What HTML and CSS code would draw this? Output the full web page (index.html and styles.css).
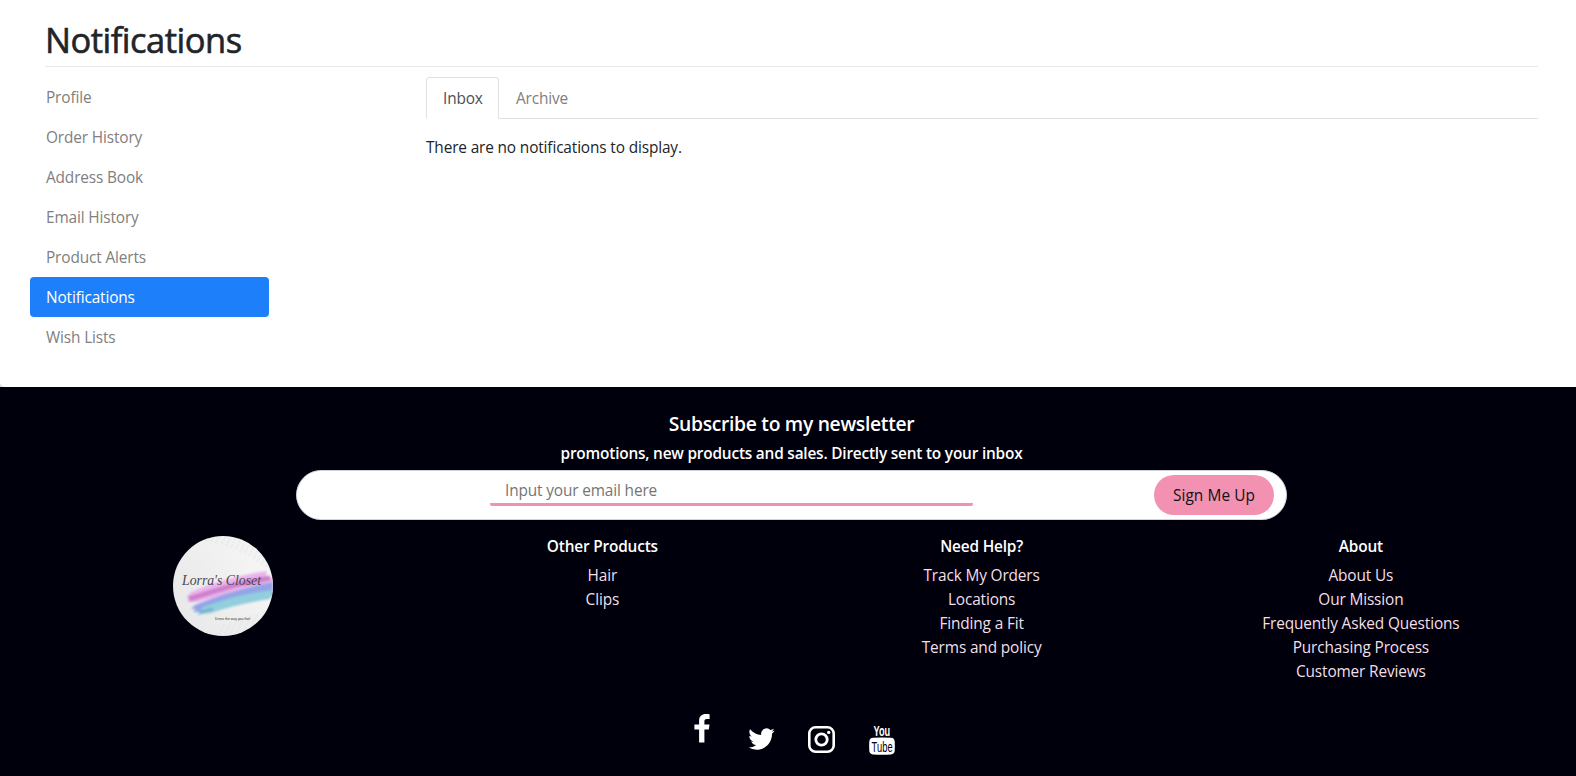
FILE: index.html
```html
<!DOCTYPE html>
<html lang="en">
<head>
<meta charset="utf-8">
<title>Notifications</title>
<link rel="stylesheet" href="styles.css">
</head>
<body>
<div class="backdrop">
  <main class="account">
    <h1 class="title">Notifications</h1>
    <div class="columns">
      <nav class="side-nav">
        <a>Profile</a>
        <a>Order History</a>
        <a>Address Book</a>
        <a>Email History</a>
        <a>Product Alerts</a>
        <a class="active">Notifications</a>
        <a>Wish Lists</a>
      </nav>
      <section class="content">
        <div class="tabs">
          <a class="tab current">Inbox</a>
          <a class="tab">Archive</a>
        </div>
        <p class="empty">There are no notifications to display.</p>
      </section>
    </div>
  </main>
</div>
<footer class="footer">
  <h5 class="news-title">Subscribe to my newsletter</h5>
  <h6 class="news-sub">promotions, new products and sales. Directly sent to your inbox</h6>
  <form class="signup">
    <input class="email" type="text" placeholder="Input your email here">
    <button class="join" type="button">Sign Me Up</button>
  </form>
  <div class="links">
    <div class="logo-cell">
      <svg class="logo" viewBox="0 0 100 100">
        <defs>
          <clipPath id="disc"><circle cx="50" cy="50" r="50"/></clipPath>
          <linearGradient id="paper" x1="1" y1="0" x2="0" y2=".6"><stop offset="0" stop-color="#f8f8f8"/><stop offset="1" stop-color="#e9e9ea"/></linearGradient>
          <pattern id="weave" width="5" height="3" patternUnits="userSpaceOnUse" patternTransform="rotate(28)"><path d="M0 1H3" stroke="#dedede" stroke-width=".8"/></pattern>
          <filter id="soft"><feGaussianBlur stdDeviation=".8"/></filter>
        </defs>
        <g clip-path="url(#disc)">
          <rect width="100" height="100" fill="url(#paper)"/>
          <path d="M30 0H100V38Q65 8 30 6ZM45 90L100 72V100H45Z" fill="url(#weave)"/>
          <g filter="url(#soft)">
            <path d="M18 56Q50 42 94 35L93 40L100 42V54Q60 56 24 66L14 66L17 62L13 62Z" fill="#e9b4ec"/>
            <path d="M16 63Q45 54 62 49L97 42" stroke="#cf80cc" stroke-width="5" fill="none"/>
            <path d="M22 69Q58 54 100 46V60Q60 66 28 76L20 76L23 73L18 73Z" fill="#93a5e6"/>
            <path d="M30 71Q65 58 100 54L97 63Q65 68 38 77L24 79L27 75Z" fill="#91cfdd"/>
            <path d="M27 76L40 73" stroke="#74abcd" stroke-width="2.5" fill="none"/>
          </g>
          <text class="logo-name" x="9" y="49" textLength="79" lengthAdjust="spacingAndGlyphs">Lorra's Closet</text>
          <text class="logo-tag" x="42" y="84" textLength="35" lengthAdjust="spacingAndGlyphs">Dress the way you feel</text>
        </g>
      </svg>
    </div>
    <div class="col">
      <h6>Other Products</h6>
      <a>Hair</a>
      <a>Clips</a>
    </div>
    <div class="col">
      <h6>Need Help?</h6>
      <a>Track My Orders</a>
      <a>Locations</a>
      <a>Finding a Fit</a>
      <a>Terms and policy</a>
    </div>
    <div class="col">
      <h6>About</h6>
      <a>About Us</a>
      <a>Our Mission</a>
      <a>Frequently Asked Questions</a>
      <a>Purchasing Process</a>
      <a>Customer Reviews</a>
    </div>
  </div>
  <div class="social">
    <svg class="facebook" viewBox="0 0 16 29"><path d="M15.6.3V4.9H12.9C10.8 4.9 10.4 5.9 10.4 7.3V10.4H15.5L14.8 15.4H10.4V28.5H5.1V15.4H.4V10.4H5.1V6.7C5.1 2.3 7.8 0 11.8 0 13.6 0 15.2.1 15.6.3Z" fill="#fff"/></svg>
    <svg class="twitter" viewBox="0 0 24 20"><path d="M23.95 2.57a10 10 0 0 1-2.82.77 4.96 4.96 0 0 0 2.16-2.72c-.95.55-2 .96-3.13 1.18a4.92 4.92 0 0 0-8.38 4.48C7.69 6.1 4.07 4.14 1.64 1.16a4.82 4.82 0 0 0-.67 2.48c0 1.71.87 3.21 2.19 4.1a4.9 4.9 0 0 1-2.23-.62v.06a4.92 4.92 0 0 0 3.95 4.83 5 5 0 0 1-2.21.08 4.94 4.94 0 0 0 4.6 3.42A9.87 9.87 0 0 1 0 17.54a14 14 0 0 0 7.55 2.21c9.05 0 14-7.5 14-13.98 0-.21 0-.42-.02-.63a9.94 9.94 0 0 0 2.46-2.55z" fill="#fff"/></svg>
    <svg class="instagram" viewBox="0 0 27 27"><rect x="1.3" y="1.3" width="24.4" height="24.4" rx="6.3" fill="none" stroke="#fff" stroke-width="2.6"/><circle cx="13.5" cy="13.5" r="5.7" fill="none" stroke="#fff" stroke-width="2.8"/><circle cx="20.7" cy="6.4" r="1.7" fill="#fff"/></svg>
    <svg class="youtube" viewBox="0 0 26 31"><text class="you" x="4.6" y="12" textLength="16.6" lengthAdjust="spacingAndGlyphs">You</text><path d="M4 13.8Q13 13 22 13.8Q25.4 14 25.7 17.5Q26 22 25.7 27Q25.4 30 22 30.4Q13 31 4 30.4Q.6 30 .3 27Q0 22 .3 17.5Q.6 14 4 13.8Z" fill="#fff"/><text class="tube" x="2.6" y="27.6" textLength="21" lengthAdjust="spacingAndGlyphs">Tube</text></svg>
  </div>
</footer>
</body>
</html>
```

FILE: styles.css
```css
* { box-sizing: border-box; }
body {
  margin: 0;
  font: 400 15.4px/24px "Open Sans", "Noto Sans", sans-serif;
  letter-spacing: -0.14px;
  color: #212529;
  background: #fff;
}
h1, h5, h6, p { margin: 0; }
.backdrop { background: linear-gradient(90deg, #ddd 50%, #fff 50%); }
.account {
  height: 387px;
  padding: 18px 38px 0 45px;
  background: #fff;
  border-bottom-left-radius: 5px;
}
.title {
  height: 49px;
  border-bottom: 1px solid #e9e9e9;
  font-size: 34.5px;
  font-weight: 500;
  line-height: 43px;
  letter-spacing: -0.5px;
  -webkit-text-stroke: 0.6px #212529;
}
.columns { display: flex; padding: 10px 0 0 1px; }
.side-nav {
  display: flex;
  flex-direction: column;
  width: 239px;
  margin: 0 157px 0 -16px;
}
.side-nav a {
  height: 40px;
  padding: 9px 16px 7px;
  border-radius: 4px;
  color: #808080;
}
.side-nav .active { color: #fff; background: #1e7ffb; }
.content { flex: 1; }
.tabs { display: flex; height: 42px; border-bottom: 1px solid #dee2e6; }
.tab {
  height: 42px;
  padding: 10px 17px 8px;
  color: #808080;
}
.tab.current {
  width: 73px;
  padding: 9px 16px 7px;
  border: 1px solid #dee2e6;
  border-bottom-color: #fff;
  border-radius: 4px 4px 0 0;
  color: #495057;
}
.empty { padding-top: 17px; }

.footer {
  height: 389px;
  padding: 24px 26px 0 33px;
  background: #00000c;
  color: #fff;
  text-align: center;
}
.news-title {
  font-size: 19.3px;
  font-weight: 600;
  line-height: 26px;
  letter-spacing: -0.3px;
}
.news-sub {
  height: 33px;
  padding-top: 5px;
  font-size: 15.4px;
  font-weight: 600;
  line-height: 24px;
  letter-spacing: -0.2px;
}
.signup {
  display: flex;
  align-items: flex-start;
  justify-content: space-between;
  width: 991px;
  height: 50px;
  margin-left: 263px;
  padding: 4px 12px 0 193px;
  border: 1px solid #ced4da;
  border-radius: 25px;
  background: #fff;
}
.email {
  width: 483px;
  height: 31px;
  padding: 2px 15px 0;
  border: 0;
  border-bottom: 3px solid #f291b2;
  border-radius: 2px;
  font: inherit;
  letter-spacing: inherit;
  background: #fff;
}
.email::placeholder { color: #757575; opacity: 1; }
.join {
  width: 120px;
  height: 40px;
  padding: 2px 0 0;
  border: 0;
  border-radius: 20px;
  font: inherit;
  letter-spacing: 0.1px;
  color: #111;
  background: #f291b2;
}
.links {
  display: grid;
  grid-template-columns: repeat(4, 1fr);
  height: 178px;
  padding-top: 16px;
}
.logo { width: 100px; height: 100px; }
.logo-name {
  font: italic 15px "Liberation Serif", serif;
  letter-spacing: 0;
  fill: #4b4650;
}
.logo-tag { font: 3.6px "Liberation Sans", sans-serif; letter-spacing: 0; fill: #333; }
.col { display: flex; flex-direction: column; padding-left: 1px; color: #f3dfe7; }
.col h6 {
  height: 28px;
  font-size: 15.4px;
  font-weight: 600;
  line-height: 21px;
  letter-spacing: -0.18px;
  color: #fff;
}
.social {
  display: flex;
  align-items: flex-start;
  padding: 16px 0 0 661px;
}
.facebook { width: 16px; height: 29px; margin-right: 38px; }
.twitter { width: 27px; height: 22px; margin: 14px 33px 0 0; }
.instagram { width: 27px; height: 27px; margin: 12px 34px 0 0; }
.youtube { width: 26px; height: 31px; margin-top: 10px; overflow: visible; }
.you, .tube { font: 700 14.5px "Liberation Sans", sans-serif; letter-spacing: 0; fill: #fff; }
.tube { font-size: 15px; font-weight: 400; fill: #00000c; }
```
